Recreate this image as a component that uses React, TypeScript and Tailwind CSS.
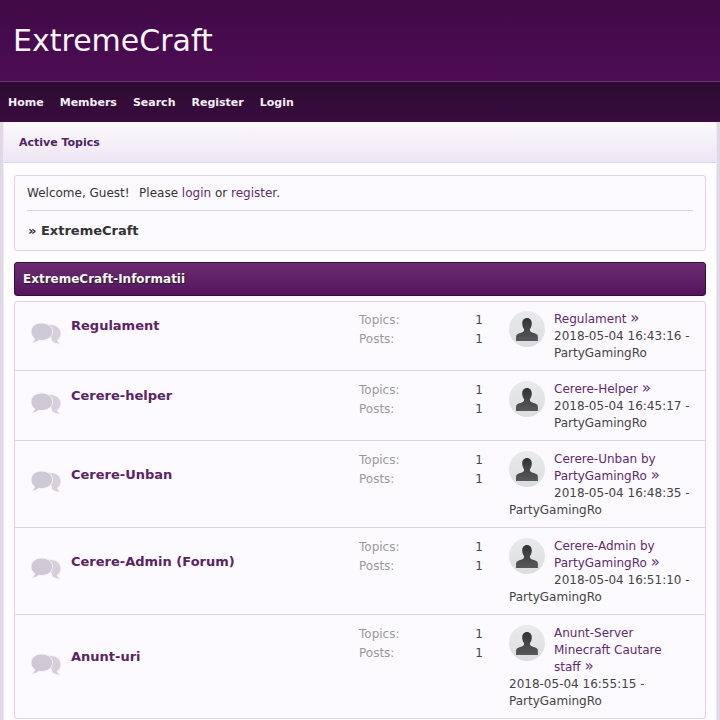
const menu = ['Home', 'Members', 'Search', 'Register', 'Login'];

const boards = [
  { name: 'Regulament', topic: 'Regulament', date: '2018-05-04 16:43:16 - PartyGamingRo' },
  { name: 'Cerere-helper', topic: 'Cerere-Helper', date: '2018-05-04 16:45:17 - PartyGamingRo' },
  { name: 'Cerere-Unban', topic: 'Cerere-Unban by PartyGamingRo', date: '2018-05-04 16:48:35 - PartyGamingRo' },
  { name: 'Cerere-Admin (Forum)', topic: 'Cerere-Admin by PartyGamingRo', date: '2018-05-04 16:51:10 - PartyGamingRo' },
  { name: 'Anunt-uri', topic: 'Anunt-Server Minecraft Cautare staff', date: '2018-05-04 16:55:15 - PartyGamingRo' },
];

const BubblesIcon = () => (
  <svg width="32" height="24" viewBox="0 0 32 24" className="mb-[6px] shrink-0">
    <path d="M17 2.500c7 -1 14 2.500 14 9 0 3.500 -2 5.500 -3.500 6.500 0.500 1.800 1.700 3.200 3 4 -3 0.300 -6 -0.500 -8.500 -2.500z" fill="#d6cfdc" stroke="#f8f5fb" />
    <path d="M11.500 1C17.800 1 22.500 4.600 22.500 9.800S17.800 18.500 11.500 18.500c-1 0 -2 -0.100 -2.800 -0.300C7 20 4.500 21 1.500 21c1.500 -1 2.800 -2.500 3.200 -4.400C2.300 15 1 12.400 1 9.800 1 4.600 5.200 1 11.500 1z" fill="#cfc8d6" stroke="#f8f5fb" />
  </svg>
);

const Avatar = () => (
  <svg width="36" height="36" viewBox="0 0 36 36" className="float-left mr-[9px] mb-[4px]">
    <defs>
      <linearGradient id="disc" x1="0" y1="0" x2="0" y2="1">
        <stop offset="0" stopColor="#e9eaeb" />
        <stop offset="1" stopColor="#dcddde" />
      </linearGradient>
      <linearGradient id="man" x1="0" y1="0" x2="0" y2="1">
        <stop offset="0" stopColor="#333335" />
        <stop offset="1" stopColor="#58585a" />
      </linearGradient>
    </defs>
    <circle cx="18" cy="18" r="18" fill="url(#disc)" />
    <path d="M18 7c3 0 4.800 2.300 4.800 5.300 0 2.500 -0.800 4.500 -1.800 5.700 -0.300 1.200 0 2.300 1.100 2.900 2.400 1 5 1.400 6.200 2.800 0.600 0.800 0.700 2 0.700 6.300H7c0 -4.300 0.100 -5.500 0.700 -6.300 1.200 -1.400 3.800 -1.800 6.200 -2.800 1.100 -0.600 1.400 -1.700 1.100 -2.900 -1 -1.200 -1.800 -3.200 -1.800 -5.700C13.200 9.300 15 7 18 7z" fill="url(#man)" />
  </svg>
);

const BoardRow = ({ board, first, last }: { board: (typeof boards)[number]; first: boolean; last: boolean }) => (
  <div className={`flex pl-[15px] pr-[14px] pb-[8px] ${first ? 'pt-[9px]' : 'pt-[10px]'} ${last ? '' : 'border-b border-[#e3d1e6]'}`}>
    <div className="flex w-[329px] shrink-0 items-center gap-[9px]">
      <BubblesIcon />
      <a className="mb-[21px] text-[13px] font-bold leading-[18px] text-[#5a2463]">{board.name}</a>
    </div>
    <div className="w-[150px] shrink-0 text-[12px] leading-[19px] text-[#999999]">
      <div className="flex justify-between pr-[26px]">
        <span>Topics:</span>
        <span className="text-[#444444]">1</span>
      </div>
      <div className="flex justify-between pr-[26px]">
        <span>Posts:</span>
        <span className="text-[#444444]">1</span>
      </div>
    </div>
    <div className="min-w-0 flex-1 text-[12px] leading-[17px] text-[#444444]">
      <Avatar />
      <a className="text-[#5f2a6b]">
        {board.topic} <span className="text-[15px] leading-none">»</span>
      </a>
      <br />
      {board.date}
    </div>
  </div>
);

export default function App() {
  return (
    <div className="h-[720px] overflow-hidden bg-[#e0d8e4] font-['DejaVu_Sans',sans-serif]">
      <header className="h-[82px] border-b border-[#5f3a69] bg-gradient-to-b from-[#3f0a45] to-[#4f0c56] pl-[13px] pt-[21px]">
        <h1 className="text-[30px] leading-[40px] text-[#f8f4fa]">ExtremeCraft</h1>
      </header>
      <nav className="flex h-[40px] items-center gap-[16px] bg-gradient-to-b from-[#2c0a30] to-[#3a0c40] pl-[8px] pt-[2px] text-[11px] font-bold text-[#f5f0f7]">
        {menu.map((item) => (
          <a key={item}>{item}</a>
        ))}
      </nav>
      <main className="mx-[3px] h-full border-x border-[#f0e9f3] bg-[#fefcff] px-[10px]">
        <div className="-mx-[10px] flex h-[41px] items-center border-b border-[#e0d3e6] bg-gradient-to-b from-[#fbf9fc] to-[#eee6f4] pl-[15px] pt-[2px] text-[11px] font-bold text-[#4f2360]">
          Active Topics
        </div>
        <section className="mt-[12px] rounded-[3px] border border-[#e3d1e6] bg-[#fcfaff] px-[12px] text-[12px] text-[#333333]">
          <p className="h-[35px] border-b border-[#e3d1e6] pt-[8px] leading-[18px]">
            Welcome, Guest!<span className="ml-[9.5px]">Please</span> <a className="text-[#5f2a6b]">login</a> or{' '}
            <a className="text-[#5f2a6b]">register</a>.
          </p>
          <p className="h-[39px] pl-[1px] pt-[11px] text-[13px] font-bold leading-[18px]">» ExtremeCraft</p>
        </section>
        <div className="mt-[11px] flex h-[34px] items-center rounded-[3px] border border-[#3a0c40] bg-gradient-to-b from-[#6a2c72] to-[#55145c] pl-[8px] text-[12px] font-bold text-[#f8f4fa] [text-shadow:1px_1px_1px_#222]">
          ExtremeCraft-Informatii
        </div>
        <section className="mt-[5px] rounded-[3px] border border-[#e3d1e6] bg-[#fcfaff]">
          {boards.map((board, i) => (
            <BoardRow key={board.name} board={board} first={i === 0} last={i === boards.length - 1} />
          ))}
        </section>
      </main>
    </div>
  );
}
